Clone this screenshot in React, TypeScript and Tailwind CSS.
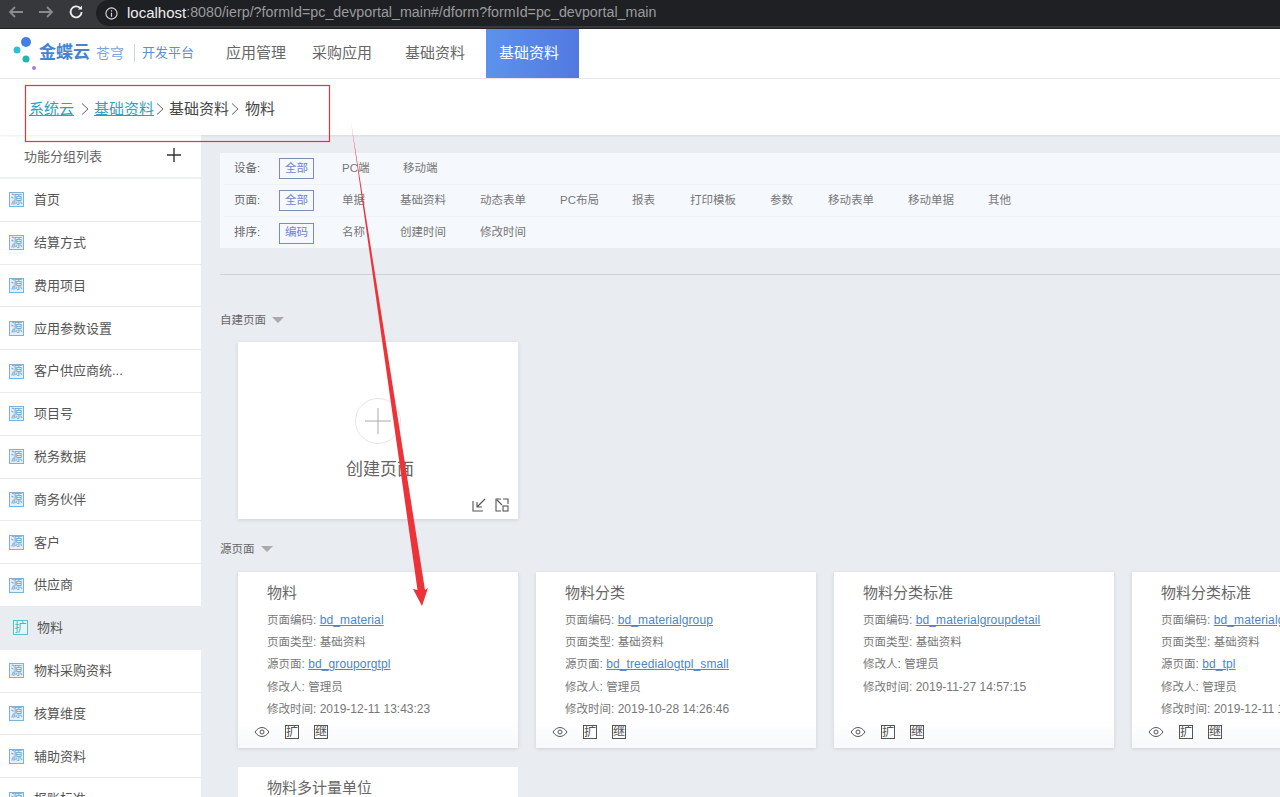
import React from "react";

const font = { fontFamily: '"Liberation Sans", "Noto Sans CJK SC", sans-serif' };

function Tag({ t, tone = "blue" }: { t: string; tone?: "blue" | "teal" | "dark" }) {
  const cls =
    tone === "blue"
      ? "w-[15px] h-[15px] border-[#7fb0d8] text-[#6fa3cf] bg-[#e6f0f8]"
      : tone === "teal"
        ? "w-[15px] h-[15px] border-[#58c3c3] text-[#4fb5b5] bg-[#e6f5f5]"
        : "w-[14px] h-[14px] border-[#555] text-[#555] bg-transparent";
  return (
    <span className={`inline-flex items-center justify-center border text-[12px] leading-none overflow-hidden shrink-0 ${cls}`}>{t}</span>
  );
}

function Chevron() {
  return (
    <svg width="10" height="14" viewBox="0 0 10 14" fill="none" stroke="#666" strokeWidth="1" className="shrink-0">
      <path d="M2 1.500 8 7l-6 5.500" />
    </svg>
  );
}

const side = ["首页", "结算方式", "费用项目", "应用参数设置", "客户供应商统...", "项目号", "税务数据", "商务伙伴", "客户", "供应商", "物料", "物料采购资料", "核算维度", "辅助资料", "报账标准"];

function Filter({ label, active, items, last }: { label: string; active: string; items: [string, number][]; last?: boolean }) {
  return (
    <div className={`flex items-center h-[32px] ml-[4px] ${last ? "" : "border-b border-[#eef1f5]"}`}>
      <span className="w-[45px] pl-[10px] text-[11.5px] text-[#666] shrink-0">{label}</span>
      <span className="w-[35px] h-[21px] ml-[10px] border border-[#7d8fb0] text-[11.5px] text-[#6f83d8] flex items-center justify-center shrink-0">{active}</span>
      <div className="flex">
        {items.map(([t, w]) => (
          <span key={t} className="text-[11.5px] text-[#777] pl-[28px] whitespace-nowrap" style={{ width: w }}>{t}</span>
        ))}
      </div>
    </div>
  );
}

function Row({ label, children }: { label: string; children: React.ReactNode }) {
  return (
    <div>
      <span className="text-[11.5px]">{label}</span>: {children}
    </div>
  );
}

function Card({ title, code, type, src, person, time }: { title: string; code: string; type: string; src?: string; person: string; time: string }) {
  return (
    <div className="w-[280px] h-[176px] shrink-0 bg-white shadow-[0_1px_4px_rgba(0,0,0,0.12)] flex flex-col">
      <div className="pl-[29px] pt-[11px] flex-1 overflow-hidden">
        <div className="text-[15px] leading-[20px] text-[#666] mb-[6px]">{title}</div>
        <div className="text-[12px] leading-[22.2px] text-[#777] whitespace-nowrap">
          <Row label="页面编码"><span className="text-[#4a86c8] underline tracking-[0.12px]">{code}</span></Row>
          <Row label="页面类型"><span className="text-[11.5px]">{type}</span></Row>
          {src && <Row label="源页面"><span className="text-[#4a86c8] underline tracking-[0.12px]">{src}</span></Row>}
          <Row label="修改人"><span className="text-[11.5px]">{person}</span></Row>
          <Row label="修改时间">{time}</Row>
        </div>
      </div>
      <div className="h-[30px] pb-[3px] bg-gradient-to-b from-white to-[#f7f9fb] flex items-center pl-[16px] gap-[15px] shrink-0">
        <svg width="16" height="12" viewBox="0 0 16 12" fill="none" stroke="#555" strokeWidth="1">
          <path d="M1 6c2-3 4.500-4.500 7-4.500S13 3 15 6c-2 3-4.500 4.500-7 4.500S3 9 1 6z" />
          <circle cx="8" cy="6" r="2" />
        </svg>
        <Tag t="扩" tone="dark" />
        <Tag t="继" tone="dark" />
      </div>
    </div>
  );
}

const pageItems: [string, number][] = [["单据", 58], ["基础资料", 80], ["动态表单", 80], ["PC布局", 72], ["报表", 58], ["打印模板", 80], ["参数", 58], ["移动表单", 80], ["移动单据", 80], ["其他", 60]];

export default function App() {
  return (
    <div className="w-[1280px] h-[797px] overflow-hidden relative bg-[#e9edf1] flex flex-col" style={font}>
      {/* browser bar */}
      <div className="h-[29px] bg-[#37383b] flex items-start shrink-0 border-b border-[#222]">
        <svg width="90" height="16" viewBox="0 0 90 16" fill="none" className="ml-[8px] mt-[4px] shrink-0" strokeWidth="1.800">
          <path d="M15 8H2M7 3 2 8l5 5" stroke="#8a8b8e" />
          <path d="M31 8h13M39 3l5 5-5 5" stroke="#8a8b8e" />
          <path d="M72 4a5.500 5.500 0 1 0 1.600 4" stroke="#eee" />
          <path d="M74 1.500v4h-4z" fill="#eee" stroke="none" />
        </svg>
        <div className="flex items-center h-[26px] ml-[-2px] flex-1 bg-[#1f2023] rounded-l-[13px] pl-[9px] whitespace-nowrap text-[15px]">
          <svg width="13" height="13" viewBox="0 0 14 14" fill="none" stroke="#ddd" strokeWidth="1.200" className="mr-[9px] shrink-0">
            <circle cx="7" cy="7" r="6" />
            <path d="M7 6.200V10.500M7 3.500v1.400" />
          </svg>
          <span className="text-[#eeeeee]">localhost</span>
          <span className="text-[#9a9b9e] text-[14.27px]">:8080/ierp/?formId=pc_devportal_main#/dform?formId=pc_devportal_main</span>
        </div>
      </div>

      {/* top nav */}
      <div className="h-[50px] bg-white flex items-stretch shrink-0 border-b border-[#e8e8e8]">
        <div className="w-[212px] relative shrink-0">
          <svg width="36" height="44" viewBox="0 0 36 44" className="absolute left-[12px] top-[5px]">
            <circle cx="14" cy="8" r="5" fill="#3f80e8" />
            <circle cx="5" cy="16" r="3.500" fill="#2fc0d8" />
            <circle cx="14" cy="25" r="3.500" fill="#23b5b0" />
            <circle cx="22" cy="34" r="2" fill="#a07fe0" />
          </svg>
          <span className="absolute left-[39px] top-[12px] text-[17px] font-bold text-[#4484d0] leading-[24px]">金蝶云</span>
          <span className="absolute left-[96px] top-[13px] text-[14px] text-[#7fa5d8] leading-[22px]">苍穹</span>
          <span className="absolute left-[134px] top-[15px] w-px h-[18px] bg-[#c8d4e4]" />
          <span className="absolute left-[142px] top-[13px] text-[13px] text-[#5b8fd8] leading-[22px]">开发平台</span>
        </div>
        <div className="flex items-center w-[60px] text-[15px] text-[#666] ml-[14px] shrink-0 whitespace-nowrap">应用管理</div>
        <div className="flex items-center w-[60px] text-[15px] text-[#666] ml-[26px] shrink-0 whitespace-nowrap">采购应用</div>
        <div className="flex items-center w-[60px] text-[15px] text-[#666] ml-[33px] shrink-0 whitespace-nowrap">基础资料</div>
        <div className="flex items-center pl-[13px] w-[93px] ml-[21px] text-[15px] text-white bg-gradient-to-r from-[#5b93ec] to-[#5279e0] shrink-0">基础资料</div>
      </div>

      {/* breadcrumb */}
      <div className="h-[56px] bg-white shrink-0 flex items-center pl-[29px] pt-[4px] text-[15px] leading-[20px] text-[#444] shadow-[0_1px_2px_rgba(0,0,0,0.08)] relative z-10">
        <span className="text-[#2f9fc4] underline">系统云</span>
        <span className="ml-[6px] mr-[4px] flex"><Chevron /></span>
        <span className="text-[#2f9fc4] underline">基础资料</span>
        <span className="ml-[1px] mr-[4px] flex"><Chevron /></span>
        <span>基础资料</span>
        <span className="ml-[1px] mr-[5px] flex"><Chevron /></span>
        <span>物料</span>
      </div>

      <div className="flex flex-1 min-h-0">
        {/* sidebar */}
        <div className="w-[201px] shrink-0 flex flex-col">
          <div className="h-[44px] bg-white flex items-center justify-between pl-[24px] pr-[20px] pt-[1px] border-b-2 border-[#eef0f2] shrink-0">
            <span className="text-[13px] text-[#666]">功能分组列表</span>
            <svg width="14" height="14" viewBox="0 0 14 14" stroke="#333" strokeWidth="1.400" className="mb-[4px]"><path d="M7 0v14M0 7h14" /></svg>
          </div>
          {side.map((s) => {
            const active = s === "物料";
            return (
              <div key={s} className={`h-[42.8px] shrink-0 flex items-center border-b ${active ? "bg-[#e9edf1] border-transparent pl-[13px] gap-[9px]" : "bg-white border-[#e8eaec] pl-[9px] gap-[10px]"}`}>
                <Tag t={active ? "扩" : "源"} tone={active ? "teal" : "blue"} />
                <span className="text-[13px] text-[#555] whitespace-nowrap">{s}</span>
              </div>
            );
          })}
        </div>

        {/* main */}
        <div className="flex-1 min-w-0 pl-[19px] pt-[18px] flex flex-col overflow-hidden">
          <div className="bg-[#f5f9fd] w-[1100px] h-[95px] shrink-0">
            <Filter label="设备:" active="全部" items={[["PC端", 61], ["移动端", 90]]} />
            <Filter label="页面:" active="全部" items={pageItems} />
            <Filter label="排序:" active="编码" last items={[["名称", 58], ["创建时间", 80], ["修改时间", 80]]} />
          </div>
          <div className="border-t border-[#cdd2d6] w-[1100px] mt-[26px] shrink-0" />

          <div className="flex items-center mt-[39px] h-[14px] shrink-0 text-[11.5px] text-[#666]">
            自建页面
            <span className="ml-[6px] w-0 h-0 border-x-[6px] border-x-transparent border-t-[6px] border-t-[#aaa] mb-[2px]" />
          </div>
          <div className="ml-[18px] mt-[14px] w-[280px] h-[177px] bg-white shadow-[0_1px_4px_rgba(0,0,0,0.12)] relative flex flex-col items-center shrink-0">
            <div className="w-[46px] h-[46px] rounded-full border border-[#e6e6e6] mt-[56px] flex items-center justify-center">
              <svg width="26" height="26" viewBox="0 0 26 26" stroke="#aaa" strokeWidth="1"><path d="M13 0v26M0 13h26" /></svg>
            </div>
            <div className="text-[17px] leading-[22px] text-[#666] mt-[15px] ml-[4px]">创建页面</div>
            <div className="absolute right-[9px] bottom-[7px] flex gap-[9px]">
              <svg width="14" height="14" viewBox="0 0 14 14" fill="none" stroke="#555" strokeWidth="1.100"><path d="M1 3v10h10M13 1 5 9M5 4v5h5" /></svg>
              <svg width="14" height="14" viewBox="0 0 14 14" fill="none" stroke="#555" strokeWidth="1.100"><path d="M6 1H1v12h5M8 1h5v5M2 2l5 5" /><rect x="8" y="8" width="5" height="5" /></svg>
            </div>
          </div>

          <div className="flex items-center mt-[24px] h-[14px] shrink-0 text-[11.5px] text-[#666]">
            源页面
            <span className="ml-[6px] w-0 h-0 border-x-[6px] border-x-transparent border-t-[6px] border-t-[#aaa] mb-[2px]" />
          </div>
          <div className="ml-[18px] mt-[15px] flex gap-[18px] shrink-0">
            <Card title="物料" code="bd_material" type="基础资料" src="bd_grouporgtpl" person="管理员" time="2019-12-11 13:43:23" />
            <Card title="物料分类" code="bd_materialgroup" type="基础资料" src="bd_treedialogtpl_small" person="管理员" time="2019-10-28 14:26:46" />
            <Card title="物料分类标准" code="bd_materialgroupdetail" type="基础资料" person="管理员" time="2019-11-27 14:57:15" />
            <Card title="物料分类标准" code="bd_materialgroupstandard" type="基础资料" src="bd_tpl" person="管理员" time="2019-12-11 13:43:23" />
          </div>
          <div className="ml-[18px] mt-[19px] w-[280px] h-[100px] bg-white shrink-0 pl-[29px] pt-[11px] text-[15px] leading-[20px] text-[#666]">物料多计量单位</div>
        </div>
      </div>

      {/* red annotations */}
      <svg className="absolute left-0 top-0 z-20 pointer-events-none" width="1280" height="797" viewBox="0 0 1280 797">
        <rect x="25.500" y="85.500" width="304" height="56" fill="none" stroke="#e0363c" strokeWidth="1.200" />
        <path d="M351 122 L425 590 L428 588 L422 606 L413 589 L417.500 590 Z" fill="#ee3338" />
      </svg>
    </div>
  );
}
